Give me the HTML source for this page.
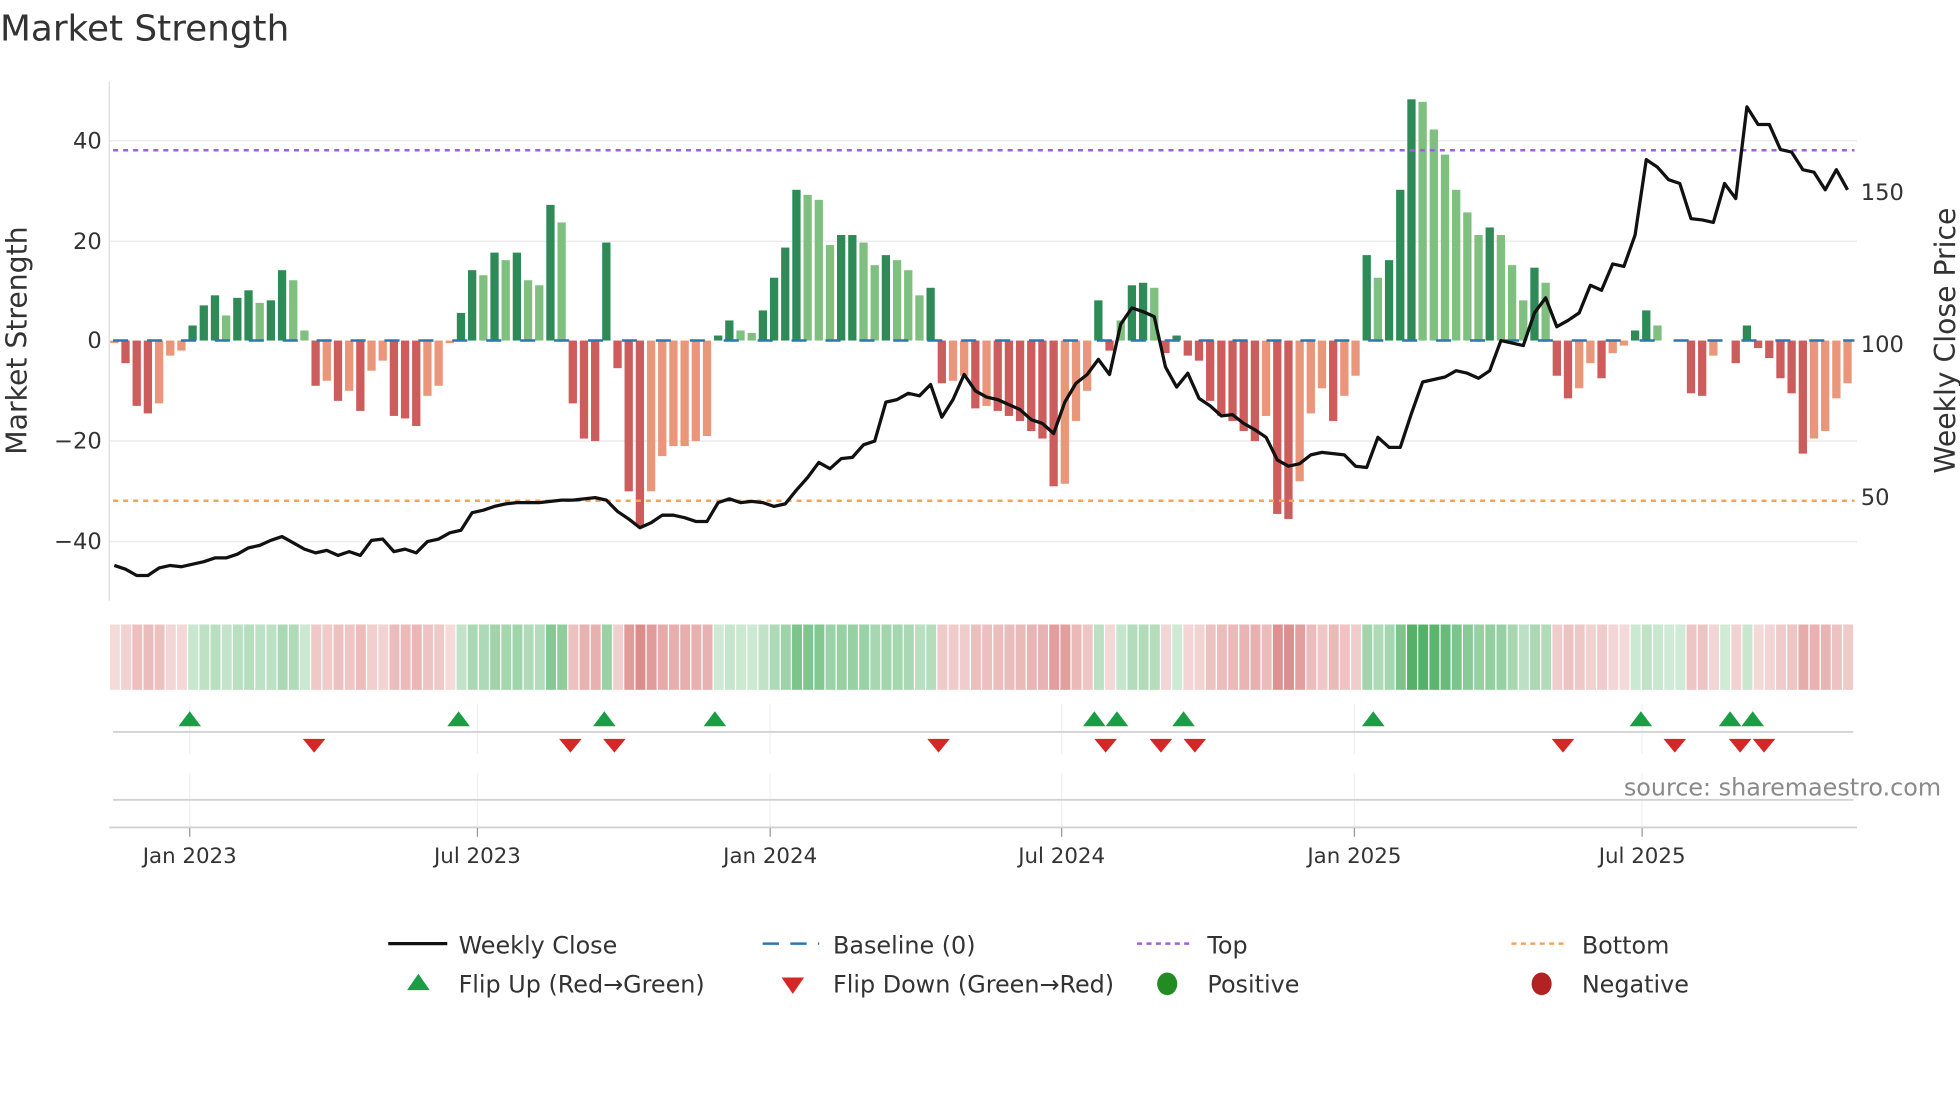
<!DOCTYPE html>
<html><head><meta charset="utf-8"><style>
html,body{margin:0;padding:0;background:#fff;}
svg{display:block;font-family:"DejaVu Sans","Liberation Sans",sans-serif;}
</style></head><body>
<svg id="c" width="1960" height="1102" viewBox="0 0 1560 877" xmlns="http://www.w3.org/2000/svg">
<rect width="1560" height="877" fill="#fff"/>
<text x="0" y="32" font-size="28.5" fill="#333">Market Strength</text>
<g stroke="#ececec" stroke-width="1.2">
<line x1="87" y1="112" x2="1478" y2="112"/><line x1="87" y1="192" x2="1478" y2="192"/>
<line x1="87" y1="351" x2="1478" y2="351"/><line x1="87" y1="431" x2="1478" y2="431"/>
</g>
<line x1="87" y1="65" x2="87" y2="478" stroke="#e0e0e0" stroke-width="1.2"/>
<g font-size="18" fill="#333" text-anchor="end">
<text x="81" y="118">40</text><text x="81" y="198">20</text><text x="81" y="277">0</text>
<text x="81" y="357">−20</text><text x="81" y="437">−40</text>
</g>
<g font-size="18" fill="#333">
<text x="1481" y="159">150</text><text x="1481" y="280">100</text><text x="1481" y="402">50</text>
</g>
<text transform="translate(21,271) rotate(-90)" font-size="22.5" fill="#333" text-anchor="middle">Market Strength</text>
<text transform="translate(1556,271) rotate(-90)" font-size="22.5" fill="#333" text-anchor="middle">Weekly Close Price</text>
<g id="bars"></g>
<line x1="90" y1="271" x2="1476" y2="271" stroke="#2a77b4" stroke-width="2" stroke-dasharray="12 15"/>
<line x1="90" y1="119.5" x2="1476" y2="119.5" stroke="#9d5fdc" stroke-width="2" stroke-dasharray="4 4"/>
<line x1="90" y1="398.5" x2="1476" y2="398.5" stroke="#f2a45e" stroke-width="2" stroke-dasharray="4 4"/>
<polyline id="price" fill="none" stroke="#111" stroke-width="2.6" stroke-linejoin="round"/>
<g id="strip"></g>
<g stroke="#eef0f3" stroke-width="1">
<line x1="151" y1="560" x2="151" y2="600"/><line x1="380" y1="560" x2="380" y2="600"/><line x1="613" y1="560" x2="613" y2="600"/><line x1="845" y1="560" x2="845" y2="600"/><line x1="1078" y1="560" x2="1078" y2="600"/><line x1="1307" y1="560" x2="1307" y2="600"/>
<line x1="151" y1="615" x2="151" y2="658"/><line x1="380" y1="615" x2="380" y2="658"/><line x1="613" y1="615" x2="613" y2="658"/><line x1="845" y1="615" x2="845" y2="658"/><line x1="1078" y1="615" x2="1078" y2="658"/><line x1="1307" y1="615" x2="1307" y2="658"/>
</g>
<line x1="90" y1="582.5" x2="1475" y2="582.5" stroke="#d2d2d2" stroke-width="1.5"/>
<line x1="90" y1="636.5" x2="1475" y2="636.5" stroke="#d2d2d2" stroke-width="1.5"/>
<line x1="87" y1="658.5" x2="1478" y2="658.5" stroke="#d2d2d2" stroke-width="1.5"/>
<g stroke="#999" stroke-width="1">
<line x1="151" y1="659" x2="151" y2="666"/><line x1="380" y1="659" x2="380" y2="666"/><line x1="613" y1="659" x2="613" y2="666"/><line x1="845" y1="659" x2="845" y2="666"/><line x1="1078" y1="659" x2="1078" y2="666"/><line x1="1307" y1="659" x2="1307" y2="666"/>
</g>
<g id="marks"></g>
<g font-size="17" fill="#333" text-anchor="middle">
<text x="151" y="687">Jan 2023</text><text x="380" y="687">Jul 2023</text><text x="613" y="687">Jan 2024</text>
<text x="845" y="687">Jul 2024</text><text x="1078" y="687">Jan 2025</text><text x="1307" y="687">Jul 2025</text>
</g>
<text x="1545" y="633" font-size="19" fill="#8a8a8a" text-anchor="end">source: sharemaestro.com</text>
<g font-size="19" fill="#333">
<line x1="309" y1="751" x2="356" y2="751" stroke="#111" stroke-width="2.6"/>
<text x="365" y="759">Weekly Close</text>
<line x1="607" y1="751" x2="652" y2="751" stroke="#2a77b4" stroke-width="2" stroke-dasharray="13 9"/>
<text x="663" y="759">Baseline (0)</text>
<line x1="905" y1="751" x2="950" y2="751" stroke="#9d5fdc" stroke-width="2" stroke-dasharray="4 3.5"/>
<text x="961" y="759">Top</text>
<line x1="1203" y1="751" x2="1248" y2="751" stroke="#f2a45e" stroke-width="2" stroke-dasharray="4 3.5"/>
<text x="1259" y="759">Bottom</text>
<polygon points="324,788 342,788 333,775" fill="#1a9e45"/>
<text x="365" y="790">Flip Up (Red→Green)</text>
<polygon points="622,778 640,778 631,791" fill="#d62728"/>
<text x="663" y="790">Flip Down (Green→Red)</text>
<ellipse cx="929" cy="783" rx="8" ry="9" fill="#228b22"/>
<text x="961" y="790">Positive</text>
<ellipse cx="1227" cy="783" rx="8" ry="9" fill="#b22222"/>
<text x="1259" y="790">Negative</text>
</g>
</svg>
<script>
var V=[-0.5,-4.5,-13,-14.5,-12.5,-3,-2, 3,7,9,5,8.5,10,7.5,8,14,12,2, -9,-8,-12,-10,-14,-6,-4,-15,-15.5,-17,-11,-9,-0.5, 5.5,14,13,17.5,16,17.5,12,11,27,23.5, -12.5,-19.5,-20, 19.5, -5.5,-30,-37,-30,-23,-21,-21,-20,-19, 1,4,2,1.5,6,12.5,18.5,30,29,28,19,21,21,19.5,15,17,16,14,9,10.5, -8.5,-8,-7,-13.5,-13,-14,-15,-16,-18,-19.5,-29,-28.5,-16,-10, 8,-2,4,11,11.5,10.5, -2.5,1,-3,-4,-12,-15,-16,-18,-20,-15,-34.5,-35.5,-28,-14.5,-9.5,-16,-11,-7, 17,12.5,16,30,48,47.5,42,37,30,25.5,21,22.5,21,15,8,14.5,11.5, -7,-11.5,-9.5,-4.5,-7.5,-2.5,-1, 2,6,3,0,0, -10.5,-11,-3,0,-4.5,3,-1.5,-3.5,-7.5,-10.5,-22.5,-19.5,-18,-11.5,-8.5];
var D="ldddlll"+"dddlddlddll"+"dldldlldddlll"+"ddldldlldl"+"ddd"+"d"+"dddllllll"+"ddllddddlllddlldllld"+"dlldldddddd"+"lll"+"ddlddl"+"dddddddddlddllldll"+"dldddlllllldllldl"+"ddlldll"+"ddlll"+"ddlldddddddllll";
var P=[450,453,458,458,452,450,451,449,447,444,444,441,436,434,430,427,432,437,440,438,442,439,442,430,429,439,437,440,431,429,424,422,408,406,403,401,400,400,400,399,398,398,397,396,398,407,413,420,416,410,410,412,415,415,400,397,400,399,400,403,401,390,380,368,373,365,364,354,351,320,318,313,315,306,332,318,298,311,316,318,322,326,334,337,345,320,305,298,286,298,258,245,248,252,292,308,297,317,323,331,330,337,342,348,366,371,369,362,360,361,362,371,372,348,356,356,329,304,302,300,295,297,301,295,271,273,275,249,237,260,255,249,227,231,210,212,187,127,133,143,146,174,175,177,146,158,85,99,99,119,121,135,137,151,135,151];
var NS="http://www.w3.org/2000/svg";
function el(t,a,p){var e=document.createElementNS(NS,t);for(var k in a)e.setAttribute(k,a[k]);p.appendChild(e);return e;}
var bars=document.getElementById('bars'),strip=document.getElementById('strip'),marks=document.getElementById('marks');
var sp=8.9,x0=91,pts=[];
function mix(c,t){return 'rgb('+c.map(function(v){return Math.round(255+(v-255)*t);}).join(',')+')';}
for(var i=0;i<V.length;i++){
 var x=x0+sp*i,v=V[i],d=D[i]==='d';
 if(Math.abs(v)>0.01){
  var col=v>0?(d?'#2e8b57':'#7fbf7f'):(d?'#cd5c5c':'#e9967a');
  var y=271-4*v;
  el('rect',{x:x-3.3,y:Math.min(y,271),width:6.6,height:Math.abs(y-271),fill:col},bars);
 }
 var t=0.22+0.6*Math.min(Math.abs(v)/45,1);
 var c=v>=0?mix([46,160,70],t):mix([205,95,92],t);
 el('rect',{x:87+sp*i+0.5,y:497,width:sp-1,height:52,fill:c},strip);
 if(i<P.length)pts.push(x.toFixed(1)+','+P[i]);
}
document.getElementById('price').setAttribute('points',pts.join(' '));
[151,365,481,569,871,889,942,1093,1306,1377,1395].forEach(function(x){el('polygon',{points:(x-9)+',578 '+(x+9)+',578 '+x+',566',fill:'#1a9e45'},marks);});
[250,454,489,747,880,924,951,1244,1333,1385,1404].forEach(function(x){el('polygon',{points:(x-9)+',588 '+(x+9)+',588 '+x+',599',fill:'#d62728'},marks);});
</script>
</body></html>
